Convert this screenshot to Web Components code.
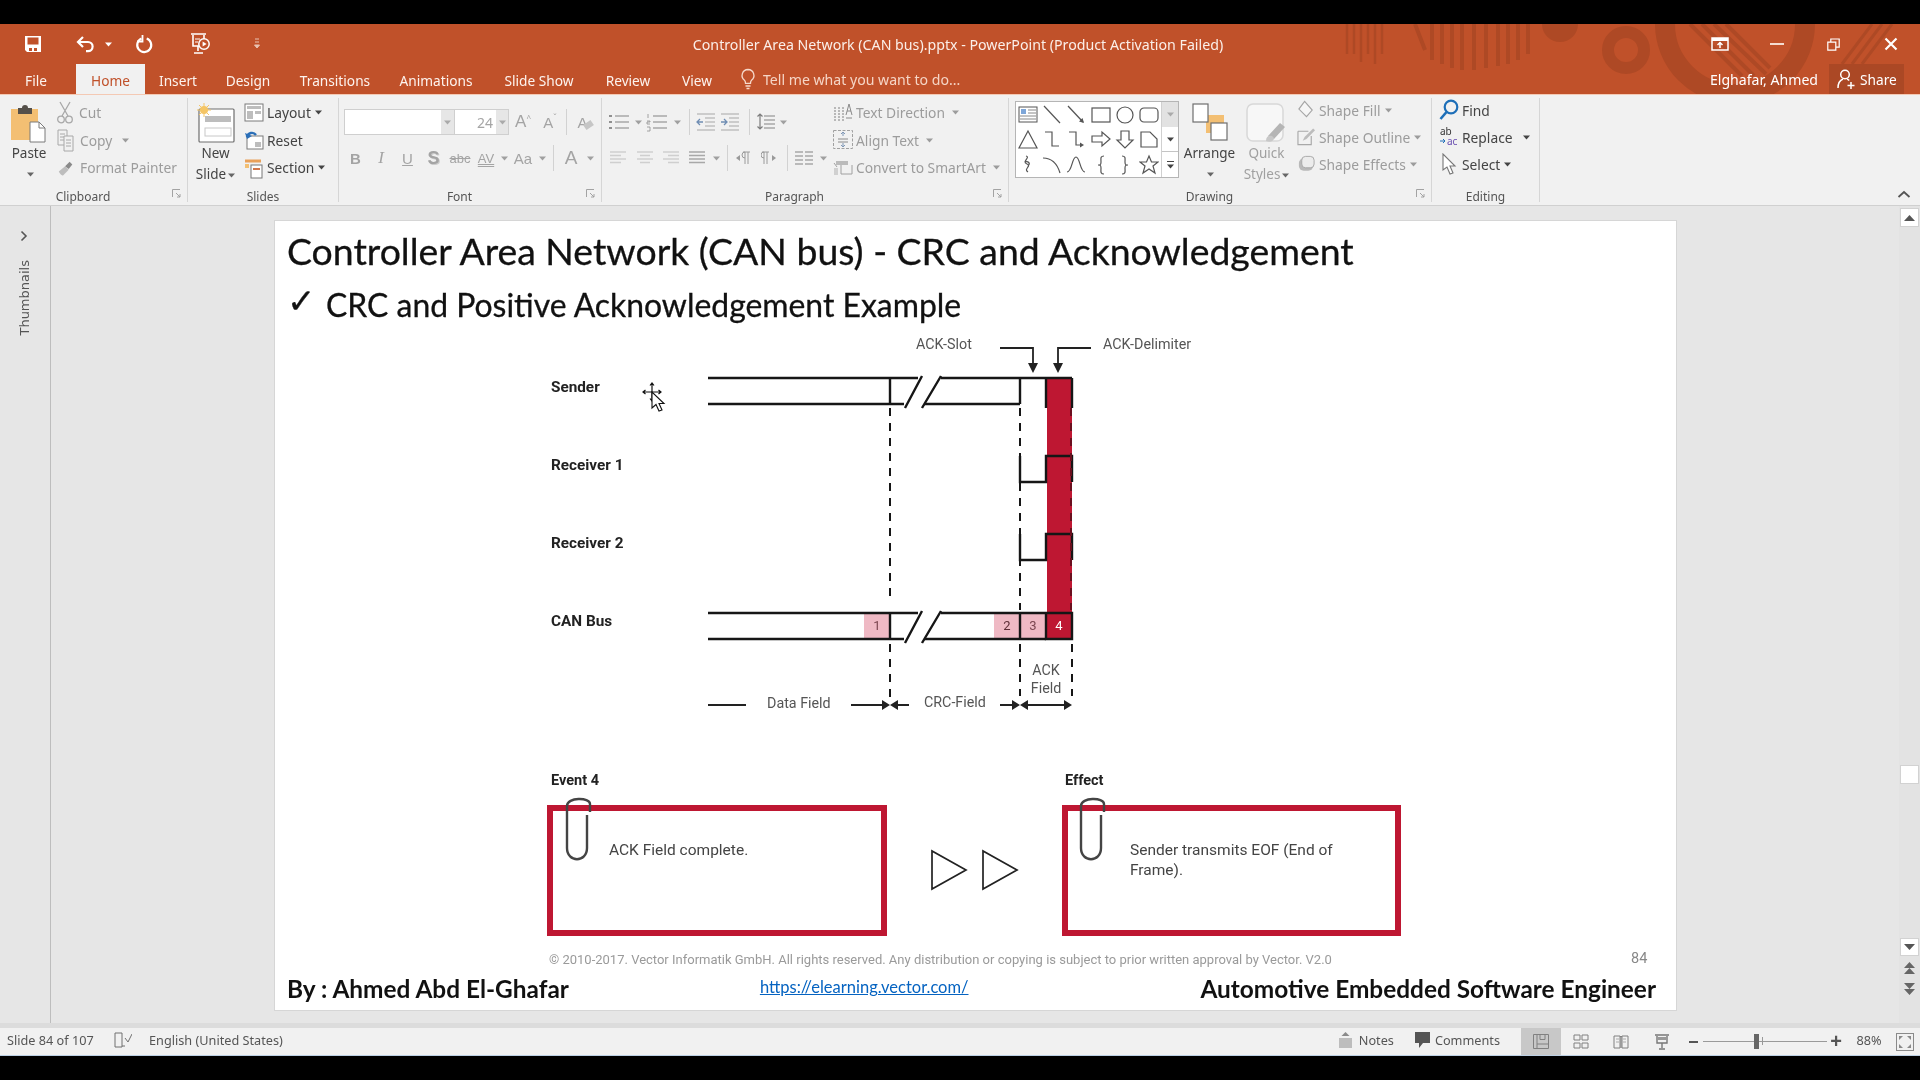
<!DOCTYPE html>
<html>
<head>
<meta charset="utf-8">
<title>Controller Area Network (CAN bus).pptx - PowerPoint</title>
<style>
  html, body { margin: 0; height: 100%; background: #000; overflow: hidden; }
  body { font-family: "Noto Sans", "Liberation Sans", sans-serif; }
</style>
</head>
<body>
<ppt-app></ppt-app>

<script>
// Iconos de la cinta: cada uno se dibuja en su propia caja, en pixeles
const G = '#a8a8a8';
const svg = (w, h, body) => `<svg width="${w}" height="${h}" viewBox="0 0 ${w} ${h}" fill="none">${body}</svg>`;

const ICONS = {
  save: svg(20, 20, `<path d="M2 2h16v16H4l-2-2z" fill="#fff"/><rect x="4.5" y="3.5" width="11" height="7" fill="#C0512A"/><rect x="6" y="14" width="3" height="3" fill="#C0512A"/><rect x="11" y="14" width="3" height="3" fill="#C0512A"/>`),
  undo: svg(22, 20, `<path d="M3 8h10a4.6 4.6 0 0 1 0 9.2h-2M8 3L3 8l5 5" stroke="#fff" stroke-width="2.2"/>`),
  redo: svg(20, 20, `<path d="M7.5 4.6a7 7 0 1 0 5.2-.1" stroke="#fff" stroke-width="2.2"/><path d="M8.5 1v6.5H3" stroke="#fff" stroke-width="1.8"/>`),
  present: svg(24, 24, `<path d="M3 2h15M5 3v11h11V3M10 14v5M6 21h9" stroke="#fff" stroke-width="1.6"/><circle cx="16" cy="12" r="5.2" fill="#C0512A" stroke="#fff" stroke-width="1.5"/><path d="M14.6 9.5l4 2.5-4 2.5z" fill="#fff"/><path d="M7 7h5M7 10h3" stroke="#fff"/>`),
  qat: svg(8, 12, `<path d="M2 1h4M2 4h4M1.500 7h5L4 10z" stroke="#e9c3b2" fill="#e9c3b2"/>`),
  caret: svg(7, 5, `<path d="M0 .5h7L3.500 4.500z" fill="currentColor"/>`),
  bulb: svg(16, 22, `<path d="M8 1.500a6 6 0 0 0-3.500 10.800c.8.700 1 2 1 3h5c0-1 .2-2.300 1-3A6 6 0 0 0 8 1.500zM5.500 18h5M6.500 20.500h3" stroke="#f6d9cb" stroke-width="1.300"/>`),
  share: svg(20, 22, `<circle cx="9" cy="6.500" r="4.300" stroke="#fff" stroke-width="1.500"/><path d="M2 20c0-5 2.500-8 5-9M11 11c.8.300 1.500.8 2.200 1.500M15 14v7M11.500 17.500h7" stroke="#fff" stroke-width="1.500"/>`),
  rrestore: svg(18, 14, `<rect x="1" y="1" width="16" height="12" stroke="#fff" stroke-width="1.500"/><rect x="1" y="1" width="16" height="3" fill="#fff"/><path d="M9 11V6M6.500 8L9 5.500 11.500 8" stroke="#fff" stroke-width="1.500"/>`),
  min: svg(14, 4, `<rect width="14" height="2" y="1" fill="#f4dcd1"/>`),
  restore: svg(13, 13, `<path d="M.8 4.200h8v8h-8zM3.800 4V1h8.400v8.200H9" stroke="#fff" stroke-width="1.200"/>`),
  close: svg(14, 14, `<path d="M1.500 1.500l11 11M12.500 1.500l-11 11" stroke="#fff" stroke-width="2.200"/>`),

  paste: svg(38, 40, `<rect x="1" y="6" width="27" height="31" fill="#F3BF73"/><path d="M8 5h4a3 3 0 0 1 6 0h4v6H8z" fill="#55504a"/><path d="M20 22h9l6 6v14H20z" transform="translate(0 -3)" fill="#fff" stroke="#7a7a7a"/><path d="M29 19v6h6" stroke="#7a7a7a"/>`),
  cut: svg(16, 24, `<path d="M3 1l8 14M13 1L5 15" stroke="${G}" stroke-width="1.300"/><circle cx="4" cy="18.500" r="3.300" stroke="${G}" stroke-width="1.300"/><circle cx="12" cy="18.500" r="3.300" stroke="${G}" stroke-width="1.300"/>`),
  copy: svg(18, 24, `<path d="M1 2h9v15H1zM3 6h5M3 9h5M3 12h5" stroke="${G}"/><path d="M7 8h9v15H7zM9 12h5M9 15h5M9 18h5" fill="#f1f1f1" stroke="${G}"/>`),
  painter: svg(20, 20, `<path d="M2 14l7-6 4 4-6 6c-2 1-4-2-5-4z" fill="#bdbdbd"/><path d="M9 8l5-5 3 3-4 5z" fill="#8a8a8a"/>`),
  newslide: svg(38, 40, `<rect x="2" y="6" width="35" height="33" rx="1" fill="#fff" stroke="#6e6e6e" stroke-width="1.200"/><rect x="8" y="13" width="26" height="6" fill="#bdbdbd"/><rect x="8" y="25" width="26" height="8" fill="none" stroke="#c8c8c8"/><circle cx="7" cy="7" r="4" fill="#F5C564"/><path d="M7 0v14M0 7h14M2 2l10 10M12 2L2 12" stroke="#F5C564"/>`),
  layout: svg(20, 20, `<rect x="1" y="1" width="18" height="17" fill="#fff" stroke="#7a7a7a"/><rect x="3" y="3" width="14" height="3" fill="#bdbdbd"/><rect x="3" y="8" width="6" height="8" fill="#bdbdbd"/><rect x="11" y="8" width="6" height="3" fill="#bdbdbd"/>`),
  reset: svg(20, 20, `<rect x="3" y="6" width="16" height="13" fill="#fff" stroke="#7a7a7a"/><rect x="11" y="12" width="6" height="5" fill="#bdbdbd"/><path d="M3 7a5 5 0 0 1 9-2" stroke="#2b6fb8" stroke-width="2.400"/><path d="M1 3l2 6 5-3z" fill="#2b6fb8"/>`),
  section: svg(20, 22, `<rect x="7" y="8" width="11" height="13" fill="#fff" stroke="#777"/><path d="M9 12h7" stroke="#d2764a" stroke-width="2"/><path d="M1 4h16" stroke="#E9A15A" stroke-width="3"/><rect x="1" y="7" width="4" height="4" fill="#F3BF73"/>`),

  bullets: svg(24, 20, `<path d="M8 4h14M8 10h14M8 16h14" stroke="${G}" stroke-width="1.300"/><path d="M2 3h3v2H2zM2 9h3v2H2zM2 15h3v2H2z" fill="#909090"/>`),
  numbers: svg(22, 20, `<path d="M7 4h14M7 10h14M7 16h14" stroke="${G}" stroke-width="1.300"/><path d="M2 2v4M1 9h3v1H1v2h3M1 15h3v4H1" stroke="#909090" stroke-width=".8"/>`),
  outdent: svg(20, 20, `<path d="M1 2h18M9 6h10M9 10h10M9 14h10M1 18h18" stroke="${G}" stroke-width="1.200"/><path d="M7 10H1M4 7l-3 3 3 3" stroke="#6f8db3" stroke-width="1.300"/>`),
  indent: svg(20, 20, `<path d="M1 2h18M9 6h10M9 10h10M9 14h10M1 18h18" stroke="${G}" stroke-width="1.200"/><path d="M1 10h6M4 7l3 3-3 3" stroke="#6f8db3" stroke-width="1.300"/>`),
  spacing: svg(20, 22, `<path d="M8 5h11M8 9h11M8 13h11M8 17h11" stroke="${G}" stroke-width="1.300"/><path d="M4 3v15M1.500 5.500L4 3l2.500 2.500M1.500 15.500L4 18l2.500-2.500" stroke="#7d7d7d" stroke-width="1.200"/>`),
  alignl: svg(18, 16, `<path d="M1 2h16M1 5.500h11M1 9h16M1 12.500h11" stroke="#cfcfcf" stroke-width="1.600"/>`),
  alignc: svg(18, 16, `<path d="M1 2h16M4 5.500h10M1 9h16M4 12.500h10" stroke="#cfcfcf" stroke-width="1.600"/>`),
  alignr: svg(18, 16, `<path d="M1 2h16M6 5.500h11M1 9h16M6 12.500h11" stroke="#cfcfcf" stroke-width="1.600"/>`),
  justify: svg(18, 16, `<path d="M1 2h16M1 5.500h16M1 9h16M1 12.500h16" stroke="${G}" stroke-width="1.400"/>`),
  ltr: svg(16, 16, `<path d="M1 8l4-3v6z" fill="#9a9a9a"/><path d="M10 2v12M13 2v12M8 2h7M10 2a3 3 0 0 0 0 6" stroke="#9a9a9a"/>`),
  rtl: svg(16, 16, `<path d="M15 8l-4-3v6z" fill="#9a9a9a"/><path d="M3 2v12M6 2v12M1 2h7M3 2a3 3 0 0 0 0 6" stroke="#9a9a9a"/>`),
  columns: svg(20, 16, `<path d="M1 2h8M11 2h8M1 6h8M11 6h8M1 10h8M11 10h8M1 14h8M11 14h8" stroke="${G}" stroke-width="1.300"/>`),
  textdir: svg(20, 24, `<path d="M2 6v14M6 6v14M10 6v14" stroke="#9a9a9a" stroke-dasharray="2 1" stroke-width="1.300"/><path d="M13 14l3-11 3 11M14 10h4" stroke="#8a8a8a"/><path d="M13 17h6" stroke="#8a8a8a"/>`),
  aligntext: svg(20, 20, `<rect x=".5" y=".5" width="19" height="18" stroke="#a0a0a0" stroke-dasharray="3 1.500"/><path d="M5 9h10M5 12h10" stroke="#8a8a8a"/><path d="M10 2v4M8 4l2-2 2 2M10 17v-4M8 15l2 2 2-2" stroke="#7f97b6"/>`),
  smartart: svg(20, 20, `<path d="M3 3h12v4H3z" fill="#bbb"/><path d="M1 5l3 4M8 7v9h11v-9" stroke="#a0a0a0"/><rect x="1" y="10" width="4" height="7" fill="#d0d0d0"/>`),
  arrange: svg(38, 38, `<rect x="15" y="12" width="18" height="18" fill="#F3BF73"/><rect x="2" y="1" width="15" height="18" fill="#fff" stroke="#6e6e6e" stroke-width="1.200"/><rect x="20" y="20" width="16" height="17" fill="#fff" stroke="#6e6e6e" stroke-width="1.200"/>`),
  quick: svg(42, 40, `<rect x="1" y="1" width="36" height="37" rx="6" fill="#f7f7f7" stroke="#d8d8d8" stroke-width="1.500"/><path d="M22 33l12-13 5 4-11 12z" fill="#b5b5b5"/><path d="M20 38c0-4 2-6 6-5l2 2c0 3-4 5-8 3z" fill="#c8c8c8"/>`),
  fill: svg(20, 20, `<path d="M8 1l8 9-6 7-8-8z" stroke="#a5a5a5" stroke-width="1.200" fill="#f6f6f6"/>`),
  outline: svg(20, 20, `<path d="M1 4h11M1 4v14h14V9" stroke="#a8a8a8" stroke-width="1.200"/><path d="M6 14l2-4 9-9 2 2-9 9z" fill="#bcbcbc"/>`),
  effects: svg(20, 20, `<rect x="2" y="4" width="15" height="13" rx="5" fill="#b9b9b9"/><rect x="5" y="2" width="13" height="12" rx="4" fill="#ececec" stroke="#a8a8a8"/>`),
  find: svg(20, 22, `<circle cx="12" cy="8" r="6.300" stroke="#1E6FB8" stroke-width="2.200"/><path d="M7.500 13L1.500 20" stroke="#1E6FB8" stroke-width="2.600"/>`),
  replace: svg(20, 22, `<text x="1" y="9" font-size="10" font-family="Noto Sans" fill="#333">ab</text><text x="8" y="19" font-size="10" font-family="Noto Sans" fill="#6a4fb0">ac</text><path d="M1 15h5M4 13l2 2-2 2" stroke="#1E6FB8"/>`),
  select: svg(16, 22, `<path d="M2 1v16l4-3 3 7 3-1-3-7h5z" fill="#fff" stroke="#777" stroke-width="1.100"/>`),
  launcher: svg(9, 9, `<path d="M.5 8V.5H8M4 4l4 4M8 5v3H5" stroke="#9a9a9a" stroke-width=".9"/>`),

  book: svg(18, 16, `<path d="M1 1h7v14H1zM8 14h3M11 6l3 4 4-8" stroke="#707070"/>`),
  notes: svg(15, 18, `<path d="M7.500 1l4 4h-8z" fill="#8a8a8a"/><rect x="1" y="7" width="13" height="10" fill="#bdbdbd"/>`),
  comments: svg(15, 17, `<path d="M0 0h15v11H8l-4 5v-5H0z" fill="#555"/>`),
  normal: svg(16, 15, `<path d="M.5.500h15v14H.5zM4 .500v14M4 10h11.500M7 .500v5h5v-5" stroke="#808080"/>`),
  sorter: svg(16, 15, `<path d="M1 1h6v5H1zM9 1h6v5H9zM1 9h6v5H1zM9 9h6v5H9z" stroke="#808080"/>`),
  reading: svg(16, 16, `<path d="M1 2h6v12H1zM9 2h6v12H9zM7 2l1 1 1-1M8 3v11" stroke="#808080"/><path d="M3 5h3M3 8h3M10 5h3M10 8h3" stroke="#aaa"/>`),
  show: svg(16, 16, `<path d="M1 1h14M3 2v7h10V2M8 9v5M5 15h6" stroke="#777" stroke-width="1.400"/><rect x="3" y="3" width="10" height="3" fill="#999"/>`),
  fit: svg(18, 18, `<rect x=".5" y=".5" width="17" height="17" stroke="#8a8a8a"/><path d="M3 3h4L3 7zM15 3v4l-4-4zM3 15v-4l4 4zM15 15h-4l4-4z" fill="#8a8a8a"/>`),
  chevL: svg(8, 12, `<path d="M1.500 1.500L6 6l-4.500 4.500" stroke="#555" stroke-width="1.600"/>`),
  up: svg(14, 9, `<path d="M1.500 7L7 2l5.500 5" stroke="#555" stroke-width="1.800"/>`),
  sUp: svg(11, 6, `<path d="M0 6l5.500-6L11 6z" fill="#555"/>`),
  sDown: svg(11, 6, `<path d="M0 0l5.500 6L11 0z" fill="#555"/>`),
  prev: svg(11, 13, `<path d="M0 6l5.500-6L11 6zM0 12l5.500-6L11 12z" fill="#666"/>`),
  next: svg(11, 13, `<path d="M0 1l5.500 6L11 1zM0 7l5.500 6L11 7z" fill="#666"/>`)
};

// Clase base: pone el html estatico en un shadow root abierto
class ShadowEl extends HTMLElement {
  constructor() {
    super();
    this.attachShadow({ mode: 'open' });
  }
  connectedCallback() {
    this.shadowRoot.innerHTML = this.render();
  }
  attr(name, fallback) {
    return this.hasAttribute(name) ? this.getAttribute(name) : fallback;
  }
}

// Boton de un solo icono o glifo, con ancho fijo
class IcoBtn extends ShadowEl {
  render() {
    const icon = ICONS[this.attr('i', '')] || '';
    return `<style>
      :host { display: flex; align-items: center; justify-content: center; width: ${this.attr('w', 24)}px; height: 100%; color: #a0a0a0; flex: none; }
      svg { display: block; }
    </style>${icon}<slot></slot>`;
  }
}

// Separador vertical de la cinta
class RSep extends ShadowEl {
  render() {
    return `<style>
      :host { display: flex; justify-content: center; width: ${this.attr('w', 12)}px; height: 100%; flex: none; }
      i { display: block; width: 1px; height: 100%; background: #d2d2d2; }
    </style><i></i>`;
  }
}

// Boton pequeno de columna: icono, texto y flecha opcional
class SmallBtn extends ShadowEl {
  render() {
    const on = this.hasAttribute('on');
    return `<style>
      :host { display: flex; align-items: center; height: var(--sb-h, 27.500px); white-space: nowrap; font-size: 13.800px; color: ${on ? '#444' : '#9c9c9c'}; }
      .ic { width: ${this.attr('iw', 20)}px; margin-right: ${this.attr('gap', 3)}px; display: flex; justify-content: center; flex: none; }
      .car { margin-left: ${this.attr('cg', 7)}px; display: flex; }
    </style>
    <span class="ic">${ICONS[this.attr('i', '')] || ''}</span><span><slot></slot></span>
    ${this.hasAttribute('caret') ? `<span class="car">${ICONS.caret}</span>` : ''}`;
  }
}

// Boton grande: icono arriba y una o dos lineas de texto
class BigBtn extends ShadowEl {
  render() {
    const on = this.hasAttribute('on');
    const l2 = this.attr('l2', '');
    return `<style>
      :host { display: flex; flex-direction: column; align-items: center; width: ${this.attr('w', 50)}px; flex: none; padding-top: 5px; font-size: 13.500px; color: ${on ? '#444' : '#a0a0a0'}; line-height: 21px; white-space: nowrap; }
      .ic { height: 40px; display: flex; }
      .car { display: inline-flex; vertical-align: middle; margin-left: 2px; color: #666; }
      .only { height: 21px; align-items: center; }
    </style>
    <span class="ic">${ICONS[this.attr('i', '')] || ''}</span>
    <span>${this.attr('l1', '')}</span>
    ${l2 ? `<span>${l2}<span class="car">${ICONS.caret}</span></span>` : `<span class="car only">${ICONS.caret}</span>`}`;
  }
}

// Grupo de la cinta, con su titulo abajo
class RibbonGroup extends ShadowEl {
  render() {
    const launcher = this.hasAttribute('launcher');
    return `<style>
      :host { display: flex; flex-direction: column; width: ${this.attr('w', 100)}px; flex: none; box-sizing: border-box; border-right: 1px solid #d6d6d6; margin-top: 3px; height: 104px; }
      .body { height: 89px; flex: none; display: flex; padding-left: ${this.attr('pl', 0)}px; }
      .label { position: relative; height: 18px; flex: none; display: flex; align-items: center; justify-content: center; font-size: 12px; color: #555; padding-right: ${launcher ? 21 : 0}px; }
      .launch { position: absolute; right: 6px; top: 2px; line-height: 0; }
    </style>
    <div class="body"><slot></slot></div>
    <div class="label">${this.attr('label', '')}${launcher ? `<span class="launch">${ICONS.launcher}</span>` : ''}</div>`;
  }
}

// Galeria de formas del grupo Dibujo
class ShapeGallery extends ShadowEl {
  render() {
    const S = 'stroke="#555" stroke-width="1.200" fill="none"';
    const shapes = [
      `<rect x="1" y="3" width="18" height="15" fill="#fff" stroke="#555"/><rect x="3" y="5" width="5" height="5" fill="#7ea6d8"/><path d="M10 6h8M10 9h8M2 12h16M2 15h16" stroke="#888"/>`,
      `<path d="M2 2l16 17" ${S}/>`,
      `<path d="M2 2l15 16" ${S}/><path d="M18 19l-5-1.500 3.500-3.500z" fill="#555"/>`,
      `<rect x="1" y="4" width="18" height="14" ${S}/>`,
      `<circle cx="10" cy="11" r="8" ${S}/>`,
      `<rect x="1" y="4" width="18" height="14" rx="4" ${S}/>`,
      `<path d="M10 2l9 17H1z" ${S}/>`,
      `<path d="M3 3h7v14h7" ${S}/>`,
      `<path d="M3 3h7v13h6" ${S}/><path d="M18 16l-4-2.500v5z" fill="#555"/>`,
      `<path d="M1 7h10V3l8 7-8 7v-4H1z" ${S}/>`,
      `<path d="M6 2h8v9h4l-8 8-8-8h4z" ${S}/>`,
      `<path d="M2 18V3h9l7 7v8z" ${S}/>`,
      `<path d="M8 2c5 1-5 6 1 8 5 2-4 5 1 8M7 8c3-1 6 1 3 4" ${S}/>`,
      `<path d="M1 4c8 0 14 5 17 15" ${S}/>`,
      `<path d="M1 18c5 0 5-15 9-15s4 15 9 15" ${S}/>`,
      `<path d="M13 2c-4 0-3 3-3 6s-1 3-3 3c2 0 3 0 3 3s-1 6 3 6" ${S}/>`,
      `<path d="M7 2c4 0 3 3 3 6s1 3 3 3c-2 0-3 0-3 3s1 6-3 6" ${S}/>`,
      `<path d="M10 2l2.500 6h6.500l-5 4 2 7-6-4-6 4 2-7-5-4h6.500z" ${S}/>`
    ];
    const cells = shapes.map(s => `<span>${svg(20, 21, s)}</span>`).join('');
    return `<style>
      :host { display: flex; width: 164px; height: 77px; margin-top: 3px; box-sizing: border-box; border: 1px solid #b5b5b5; background: #fff; flex: none; }
      .grid { display: grid; grid-template-columns: repeat(6, 24.200px); grid-template-rows: repeat(3, 25px); flex: none; }
      span { display: flex; align-items: center; justify-content: center; }
      .sb { flex: 1; display: flex; flex-direction: column; border-left: 1px solid #d0d0d0; color: #444; }
      .sb div { flex: 1; display: flex; align-items: center; justify-content: center; }
      .sb .a { background: #e2e2e2; color: #aaa; }
      .sb .c { border-top: 1px solid #c4c4c4; flex-direction: column; gap: 2px; }
      .sb .c:before { content: ""; width: 7px; height: 1px; background: #444; }
    </style>
    <div class="grid">${cells}</div>
    <div class="sb"><div class="a">${ICONS.caret}</div><div>${ICONS.caret}</div><div class="c">${ICONS.caret}</div></div>`;
  }
}

// Cabecera naranja: barra de titulo y pestanas
class PptHeader extends ShadowEl {
  render() {
    const tabs = [['Insert', 66], ['Design', 74], ['Transitions', 100], ['Animations', 102], ['Slide Show', 104], ['Review', 74], ['View', 64]];
    return `<style>
      :host { display: block; position: relative; height: 71px; background: #C0512A; overflow: hidden; color: #fff; }
      .decor { position: absolute; left: 0; top: 0; }
      .top, .tabs { position: relative; display: flex; align-items: center; }
      .top { height: 40px; display: grid; grid-template-columns: 1fr auto 1fr; }
      .qat, .ctl { display: flex; height: 40px; align-items: center; }
      .qat { padding-left: 18px; }
      .ctl { justify-content: flex-end; padding-right: 1px; }
      .title { font-size: 14.200px; white-space: nowrap; color: #fbefe9; padding-right: 4px; }
      .tabs { height: 30px; font-size: 13.700px; }
      .tab { display: flex; align-items: center; justify-content: center; height: 30px; padding-top: 2px; box-sizing: border-box; white-space: nowrap; color: #fdf3ee; flex: none; }
      .home { height: 31px; width: 69px; background: #F1F1F1; color: #C0512A; margin-top: 1px; padding-top: 1px; }
      .file { width: 48px; margin: 0 16px 0 12px; }
      .tell { display: flex; align-items: center; gap: 7px; margin-left: 11px; color: #f5d5c6; font-size: 14.100px; white-space: nowrap; }
      .me { margin-left: auto; margin-right: 11px; white-space: nowrap; font-size: 14.100px; }
      .share { width: 75px; margin-right: 16px; height: 30px; background: #AB4825; display: flex; align-items: center; gap: 4px; padding: 0 0 0 7px; box-sizing: border-box; font-size: 13.700px; flex: none; }
      .line { position: absolute; left: 0; right: 0; bottom: 0; height: 1px; background: #F4C9B4; }
    </style>
    <svg class="decor" width="1920" height="70" fill="#AE4925">
      <g stroke="#AE4925" fill="none">
        <path d="M1347 0v30M1354 0v30M1361 0v38M1368 0v30M1375 0v40M1382 0v30" stroke-width="2.500"/>
        <path d="M1415 0l10 26M1432 0v36M1442 0v40M1452 0v44M1462 0v46M1474 0v46M1486 0v44M1498 0v42M1508 0v40M1518 0v36M1528 0v30" stroke-width="4"/>
        <circle cx="1626" cy="26" r="18" stroke-width="12"/>
        <circle cx="1735" cy="0" r="70" stroke-width="20"/>
        <path d="M1690 0l52 52M1702 0l52 52M1714 0l52 50M1726 0l44 44" stroke-width="4"/>
        <path d="M1842 40l30-40M1852 40l30-40M1862 40l30-40" stroke-width="3"/>
      </g>
      <circle cx="1560" cy="0" r="18"/>
    </svg>
    <div class="top">
      <div class="qat">
        <ico-btn w="30" i="save"></ico-btn><r-gap w="23"></r-gap>
        <ico-btn w="30" i="undo"></ico-btn><ico-btn w="14" i="caret" style="color:#fff"></ico-btn><r-gap w="14"></r-gap>
        <ico-btn w="30" i="redo"></ico-btn><r-gap w="26"></r-gap>
        <ico-btn w="30" i="present"></ico-btn><r-gap w="34"></r-gap>
        <ico-btn w="16" i="qat"></ico-btn>
      </div>
      <div class="title">Controller Area Network (CAN bus).pptx - PowerPoint (Product Activation Failed)</div>
      <div class="ctl">
        <ico-btn w="57" i="rrestore"></ico-btn><ico-btn w="57" i="min"></ico-btn><ico-btn w="57" i="restore"></ico-btn><ico-btn w="57" i="close"></ico-btn>
      </div>
    </div>
    <div class="tabs">
      <div class="tab file">File</div>
      <div class="tab home">Home</div>
      ${tabs.map(t => `<div class="tab" style="width:${t[1]}px">${t[0]}</div>`).join('')}
      <div class="tell">${ICONS.bulb}<span>Tell me what you want to do...</span></div>
      <div class="me">Elghafar, Ahmed</div>
      <div class="share">${ICONS.share}<span>Share</span></div>
    </div>
    <div class="line"></div>`;
  }
}

class RGap extends ShadowEl {
  render() {
    return `<style>:host { display: block; width: ${this.attr('w', 8)}px; flex: none; }</style>`;
  }
}

// La cinta con sus seis grupos
class PptRibbon extends ShadowEl {
  render() {
    return `<style>
      :host { display: flex; height: 110px; background: #F1F1F1; border-bottom: 1px solid #d0d0d0; position: relative; }
      .col { display: flex; flex-direction: column; flex: none; padding-top: 1px; }
      .tight { padding-top: 0; margin-top: -1.500px; --sb-h: 27px; }
      .rows { display: flex; flex-direction: column; flex: none; }
      .row { display: flex; height: 26px; flex: none; color: #a0a0a0; }
      .r1 { margin-top: 11px; }
      .r2 { margin-top: 10px; }
      .box { height: 26px; box-sizing: border-box; background: #fff; border: 1px solid #cfcfcf; display: flex; justify-content: flex-end; align-items: center; flex: none; font-size: 14px; color: #a5a5a5; }
      .drop { width: 13px; height: 100%; background: #e6e6e6; display: flex; align-items: center; justify-content: center; color: #aaa; }
      .b { font-family: "Liberation Sans", sans-serif; font-size: 15px; color: #a4a4a4; }
      .collapse { position: absolute; right: 9px; bottom: 6px; line-height: 0; }
    </style>

    <ribbon-group w="188" label="Clipboard" launcher>
      <big-btn w="44" l1="Paste" i="paste" on style="margin-left:7px"></big-btn>
      <div class="col" style="margin-left:6px">
        <small-btn i="cut" iw="16" gap="6">Cut</small-btn>
        <small-btn i="copy" iw="18" gap="5" caret cg="10">Copy</small-btn>
        <small-btn i="painter" iw="18" gap="5">Format Painter</small-btn>
      </div>
    </ribbon-group>

    <ribbon-group w="151" label="Slides">
      <big-btn w="53" l1="New" l2="Slide" i="newslide" on style="margin-left:1px"></big-btn>
      <div class="col" style="margin-left:2px">
        <small-btn i="layout" on caret cg="4">Layout</small-btn>
        <small-btn i="reset" on>Reset</small-btn>
        <small-btn i="section" on caret cg="4">Section</small-btn>
      </div>
    </ribbon-group>

    <ribbon-group w="263" label="Font" launcher pl="5">
      <div class="rows">
        <div class="row r1">
          <div class="box" style="width:111px"><div class="drop">${ICONS.caret}</div></div>
          <div class="box" style="width:54px;border-left:0"><span style="margin-right:3px">24</span><div class="drop" style="width:12px">${ICONS.caret}</div></div>
          <ico-btn w="28"><span class="b" style="font-size:17px">A</span><span style="font-size:8px;margin-top:-10px">^</span></ico-btn>
          <ico-btn w="26"><span class="b" style="font-size:15px">A</span><span style="font-size:8px;margin-top:-10px">ˇ</span></ico-btn>
          <r-sep w="6"></r-sep>
          <ico-btn w="32"><span class="b" style="font-size:15px">A</span><span style="width:9px;height:6px;background:#c6c6c6;transform:rotate(-35deg);margin:6px 0 0 -4px"></span></ico-btn>
        </div>
        <div class="row r2">
          <ico-btn w="23"><b class="b">B</b></ico-btn>
          <ico-btn w="28"><i class="b" style="font-family:'Liberation Serif',serif;font-size:17px">I</i></ico-btn>
          <ico-btn w="25"><u class="b">U</u></ico-btn>
          <ico-btn w="27"><b class="b" style="font-size:18px;text-shadow:1px 1px 0 #ccc">S</b></ico-btn>
          <ico-btn w="26"><s class="b" style="font-size:13px">abc</s></ico-btn>
          <ico-btn w="26"><u class="b" style="font-size:13px;text-decoration-style:double">AV</u></ico-btn>
          <ico-btn w="10" i="caret"></ico-btn>
          <ico-btn w="28"><span class="b">Aa</span></ico-btn>
          <ico-btn w="10" i="caret"></ico-btn>
          <r-sep w="12"></r-sep>
          <ico-btn w="24"><span class="b" style="font-size:19px">A</span></ico-btn>
          <ico-btn w="14" i="caret"></ico-btn>
        </div>
      </div>
    </ribbon-group>

    <ribbon-group w="407" label="Paragraph" launcher pl="3">
      <div class="rows" style="width:228px">
        <div class="row r1">
          <ico-btn w="28" i="bullets"></ico-btn><ico-btn w="10" i="caret"></ico-btn>
          <ico-btn w="28" i="numbers"></ico-btn><ico-btn w="12" i="caret"></ico-btn>
          <r-sep w="12"></r-sep>
          <ico-btn w="22" i="outdent"></ico-btn><ico-btn w="25" i="indent"></ico-btn>
          <r-sep w="14"></r-sep>
          <ico-btn w="20" i="spacing"></ico-btn><ico-btn w="14" i="caret"></ico-btn>
        </div>
        <div class="row r2">
          <ico-btn w="26" i="alignl"></ico-btn><ico-btn w="27" i="alignc"></ico-btn><ico-btn w="25" i="alignr"></ico-btn>
          <ico-btn w="28" i="justify"></ico-btn><ico-btn w="10" i="caret"></ico-btn>
          <r-sep w="12"></r-sep>
          <ico-btn w="20" i="ltr"></ico-btn><ico-btn w="32" i="rtl"></ico-btn>
          <r-sep w="4"></r-sep>
          <ico-btn w="30" i="columns"></ico-btn><ico-btn w="8" i="caret"></ico-btn>
        </div>
      </div>
      <div class="col">
        <small-btn i="textdir" caret>Text Direction</small-btn>
        <small-btn i="aligntext" caret>Align Text</small-btn>
        <small-btn i="smartart" caret>Convert to SmartArt</small-btn>
      </div>
    </ribbon-group>

    <ribbon-group w="423" label="Drawing" launcher pl="6">
      <shape-gallery></shape-gallery>
      <big-btn w="61" l1="Arrange" i="arrange" on></big-btn>
      <big-btn w="53" l1="Quick" l2="Styles" i="quick"></big-btn>
      <div class="col tight" style="margin-left:4px">
        <small-btn i="fill" iw="19" caret cg="4">Shape Fill</small-btn>
        <small-btn i="outline" iw="19" caret cg="4">Shape Outline</small-btn>
        <small-btn i="effects" iw="19" caret cg="4">Shape Effects</small-btn>
      </div>
    </ribbon-group>

    <ribbon-group w="108" label="Editing" pl="7">
      <div class="col tight">
        <small-btn i="find" on>Find</small-btn>
        <small-btn i="replace" on caret cg="10">Replace</small-btn>
        <small-btn i="select" on caret cg="4">Select</small-btn>
      </div>
    </ribbon-group>

    <span class="collapse">${ICONS.up}</span>`;
  }
}

// Panel plegado de miniaturas
class ThumbPane extends ShadowEl {
  render() {
    return `<style>
      :host { display: flex; flex-direction: column; align-items: center; width: 51px; box-sizing: border-box; border-right: 1px solid #bdbdbd; padding: 24px 2px 0 0; flex: none; }
      .t { writing-mode: vertical-rl; transform: rotate(180deg); font-family: "DejaVu Sans", sans-serif; font-size: 13px; color: #555; margin-top: 18px; }
    </style>${ICONS.chevL}<div class="t">Thumbnails</div>`;
  }
}

// Diagrama de la trama CAN sobre el lienzo de la diapositiva
class CanDiagram extends ShadowEl {
  render() {
    const RED = '#BE1732', PINK = '#EFB9C4', K = '#161616';
    // linea doble del bus con el corte en diagonal; end es donde acaba la linea de abajo
    const bus = (t, b, end) => `
      <path d="M708 ${t}H918M941 ${t}H1046M708 ${b}H904M924 ${b}H${end}" />
      <path d="M922 ${t - 2}L905 ${b + 4}M941 ${t - 2}L922 ${b + 4}" />
      <path d="M890 ${t}V${b}M1020 ${t}V${b}" />`;
    const boxText = (x, y, t, fill) => `<text x="${x}" y="${y}" text-anchor="middle" font-size="13" fill="${fill}">${t}</text>`;
    const label = (y, t) => `<text x="551" y="${y}" font-size="15.300" font-weight="700" fill="#222">${t}</text>`;
    const card = (x, w) => `<rect x="${x + 3}" y="808" width="${w - 6}" height="125" fill="#fff" stroke="${RED}" stroke-width="6"/>`;
    const clip = x => `<path d="M${x + 24} 812V804C${x + 24} 797 ${x + 1} 797 ${x + 1} 806V848C${x + 1} 863 ${x + 21} 863 ${x + 21} 848V815" fill="none" stroke="#444" stroke-width="2.400"/>`;
    return `<style>
      :host { display: block; flex: none; height: 645px; }
      svg { display: block; font-family: Roboto, "Liberation Sans", sans-serif; }
    </style>
    <svg width="1401" height="645" viewBox="275 325 1401 645">
      <rect x="1047" y="378" width="25" height="261" fill="${RED}"/>
      <rect x="864" y="613" width="26" height="26" fill="${PINK}"/>
      <rect x="994" y="613" width="26" height="26" fill="${PINK}"/>
      <rect x="1020" y="613" width="26" height="26" fill="${PINK}"/>

      <g fill="none" stroke="${K}" stroke-width="2.400">
        ${bus(378, 404, 1020)}
        ${bus(613, 639, 1046)}
        <path d="M1046 378H1072M1046 378V408M1072 378V408"/>
        <path d="M1020 456V482H1046V456H1072V482M1020 534V560H1046V534H1072V560"/>
        <path d="M1046 613H1072V639H1046V613"/>
      </g>
      <g fill="none" stroke="${K}" stroke-width="2" stroke-dasharray="8 7">
        <path d="M890 408V600M1020 408V610M890 644V702M1020 644V696M1072 644V696"/>
      </g>
      <path d="M1071 408V610" fill="none" stroke="#6b0f1e" stroke-width="2" stroke-dasharray="8 7"/>

      ${boxText(877, 630, '1', '#7c4650')}${boxText(1007, 630, '2', '#5d2d36')}${boxText(1033, 630, '3', '#7c4650')}${boxText(1059, 630, '4', '#fff')}

      <g fill="none" stroke="#222" stroke-width="1.800">
        <path d="M1000 348H1033V364M1091 348H1058V364"/>
        <path d="M708 705H746M851 705H884M897 705H909M1000 705H1014M1027 705H1066"/>
      </g>
      <g fill="#222">
        <path d="M1028 363H1038L1033 373zM1053 363H1063L1058 373z"/>
        <path d="M882 700V710L890 705zM898 700V710L890 705zM1012 700V710L1020 705zM1028 700V710L1020 705zM1064 700V710L1072 705z"/>
      </g>

      <g font-size="14.300" fill="#555">
        <text x="916" y="349">ACK-Slot</text>
        <text x="1103" y="349">ACK-Delimiter</text>
        <text x="767" y="708">Data Field</text>
        <text x="924" y="707">CRC-Field</text>
        <text x="1046" y="675" text-anchor="middle">ACK</text>
        <text x="1046" y="693" text-anchor="middle">Field</text>
      </g>
      ${label(392, 'Sender')}${label(470, 'Receiver 1')}${label(548, 'Receiver 2')}${label(626, 'CAN Bus')}

      <g stroke="#111" fill="none" stroke-width="1.200">
        <path d="M652 383V401M643 392H661M650 385.500L652 383L654 385.500M650 398.500L652 401L654 398.500M645.500 390L643 392L645.500 394M658.500 390L661 392L658.500 394"/>
      </g>
      <path d="M652 392V408L656 404.500L659 411L662 410L659 403.500H664Z" fill="#fff" stroke="#111" stroke-width="1.100"/>

      <g font-size="14.500" font-weight="700" fill="#222">
        <text x="551" y="785">Event 4</text>
        <text x="1065" y="785">Effect</text>
      </g>
      ${card(547, 340)}${card(1062, 339)}
      ${clip(566)}${clip(1080)}
      <g font-size="15.500" fill="#444">
        <text x="609" y="855">ACK Field complete.</text>
        <text x="1130" y="855">Sender transmits EOF (End of</text>
        <text x="1130" y="875">Frame).</text>
      </g>
      <path d="M932 851V889L966 870zM983 851V889L1017 870z" fill="#fff" stroke="#222" stroke-width="1.700"/>
      <text x="549" y="964" font-size="13" fill="#9a9a9a">© 2010-2017. Vector Informatik GmbH. All rights reserved. Any distribution or copying is subject to prior written approval by Vector. V2.0</text>
      <text x="1631" y="963" font-size="14.500" fill="#888">84</text>
    </svg>`;
  }
}

// La diapositiva: titulo, subtitulo, diagrama y pie
class PptSlide extends ShadowEl {
  render() {
    return `<style>
      :host { display: flex; flex-direction: column; width: 1401px; height: 789px; flex: none; background: #fff; box-shadow: 0 0 0 1px #d6d6d6; font-family: Lato, "Liberation Sans", sans-serif; color: #111; box-sizing: border-box; }
      h1 { margin: 0; height: 62px; padding: 7px 0 0 12px; box-sizing: border-box; font-size: 37.400px; font-weight: 400; line-height: 46px; white-space: nowrap; -webkit-text-stroke: .3px #111; }
      h2 { margin: 0; height: 42px; padding: 1px 0 0 12px; display: flex; align-items: center; font-size: 31.900px; font-weight: 400; white-space: nowrap; box-sizing: border-box; -webkit-text-stroke: .3px #111; }
      .ck { width: 39px; font-family: "DejaVu Sans", sans-serif; font-size: 34px; margin-top: -8px; }
      footer { display: flex; align-items: center; height: 40px; flex: none; padding: 0 20px 0 12px; margin-top: -2px; font-weight: 700; font-size: 24.400px; white-space: nowrap; }
      .mid { flex: 1; padding-left: 191px; line-height: 20px; margin-top: -5px; }
      a { color: #0563C1; font-size: 16.500px; font-weight: 400; text-decoration: underline; }
    </style>
    <h1>Controller Area Network (CAN bus) - CRC and Acknowledgement</h1>
    <h2><span class="ck">✓</span>CRC and Positive Acknowledgement Example</h2>
    <can-diagram></can-diagram>
    <footer><span>By : Ahmed Abd El-Ghafar</span><span class="mid"><a>https://elearning.vector.com/</a></span><span>Automotive Embedded Software Engineer</span></footer>`;
  }
}

// Barra de desplazamiento vertical
class PptScroll extends ShadowEl {
  render() {
    return `<style>
      :host { display: flex; flex-direction: column; align-items: center; width: 21px; flex: none; padding-top: 2px; box-sizing: border-box; margin-left: auto; background: #e3e3e3; }
      .b { width: 19px; height: 19px; background: #fff; border: 1px solid #d2d2d2; box-sizing: border-box; display: flex; align-items: center; justify-content: center; flex: none; }
      .thumb { margin-top: 538px; height: 19px; }
      .dn { margin-top: 154px; height: 18px; }
      .p { margin-top: 9px; line-height: 0; }
    </style>
    <div class="b">${ICONS.sUp}</div>
    <div class="b thumb"></div>
    <div class="b dn">${ICONS.sDown}</div>
    <div class="p" style="margin-top:6px">${ICONS.prev}</div>
    <div class="p" style="margin-top:7px">${ICONS.next}</div>`;
  }
}

// Barra de estado
class PptStatus extends ShadowEl {
  render() {
    return `<style>
      :host { display: flex; align-items: center; height: 27px; background: #F1F1F1; font-size: 12.700px; color: #555; white-space: nowrap; border-bottom: 1px solid #bcd0e4; }
      .l { display: flex; align-items: center; padding: 0 0 3px 7px; box-sizing: border-box; flex: none; height: 100%; }
      .r { display: flex; align-items: center; margin-left: auto; height: 100%; }
      .notes { display: flex; align-items: center; gap: 6px; margin-right: 21px; padding-bottom: 3px; }
      .active { background: #c8c8c8; }
      .track { width: 124px; height: 100%; position: relative; }
      .track:before { content: ""; position: absolute; left: 0; right: 0; top: 13px; height: 1px; background: #9a9a9a; }
      .track i { position: absolute; left: 51px; top: 6px; width: 5px; height: 15px; background: #666; }
      .track u { position: absolute; left: 59px; top: 9px; width: 1px; height: 8px; background: #999; }
      .pct { width: 34px; text-align: center; margin-left: 7px; margin-right: 8px; padding-bottom: 3px; }
    </style>
    <div class="l"><span style="width:107px">Slide 84 of 107</span>${ICONS.book}<span style="margin-left:17px">English (United States)</span></div>
    <div class="r">
      <span class="notes">${ICONS.notes}<span>Notes</span></span>
      <span class="notes" style="gap:5px">${ICONS.comments}<span>Comments</span></span>
      <ico-btn w="40" i="normal" class="active"></ico-btn>
      <ico-btn w="40" i="sorter"></ico-btn>
      <ico-btn w="40" i="reading"></ico-btn>
      <ico-btn w="42" i="show"></ico-btn>
      <ico-btn w="20"><span style="width:9px;height:2px;background:#555"></span></ico-btn>
      <div class="track"><i></i><u></u></div>
      <ico-btn w="18"><span style="font-size:20px;color:#555;font-weight:700;font-family:'Liberation Sans',sans-serif">+</span></ico-btn>
      <span class="pct">88%</span>
      <ico-btn w="22" i="fit"></ico-btn><r-gap w="4"></r-gap>
    </div>`;
  }
}

// Ventana completa con las bandas negras del video arriba y abajo
class PptApp extends ShadowEl {
  render() {
    return `<style>
      :host { display: flex; flex-direction: column; width: 1920px; height: 1080px; background: #000; filter: blur(.6px); }
      .ws { display: flex; height: 817px; background: #E6E6E6; flex: none; }
      .canvas { padding: 15px 0 0 224px; flex: none; }
      .strip { height: 5px; background: #dcdcdc; flex: none; }
    </style>
    <div style="height:24px;flex:none"></div>
    <ppt-header></ppt-header>
    <ppt-ribbon></ppt-ribbon>
    <div class="ws">
      <thumb-pane></thumb-pane>
      <div class="canvas"><ppt-slide></ppt-slide></div>
      <ppt-scroll></ppt-scroll>
    </div>
    <div class="strip"></div>
    <ppt-status></ppt-status>`;
  }
}

// Registrar los componentes, primero los mas pequenos
customElements.define('r-gap', RGap);
customElements.define('ico-btn', IcoBtn);
customElements.define('r-sep', RSep);
customElements.define('small-btn', SmallBtn);
customElements.define('big-btn', BigBtn);
customElements.define('ribbon-group', RibbonGroup);
customElements.define('shape-gallery', ShapeGallery);
customElements.define('ppt-header', PptHeader);
customElements.define('ppt-ribbon', PptRibbon);
customElements.define('thumb-pane', ThumbPane);
customElements.define('can-diagram', CanDiagram);
customElements.define('ppt-slide', PptSlide);
customElements.define('ppt-scroll', PptScroll);
customElements.define('ppt-status', PptStatus);
customElements.define('ppt-app', PptApp);
</script>
</body>
</html>
